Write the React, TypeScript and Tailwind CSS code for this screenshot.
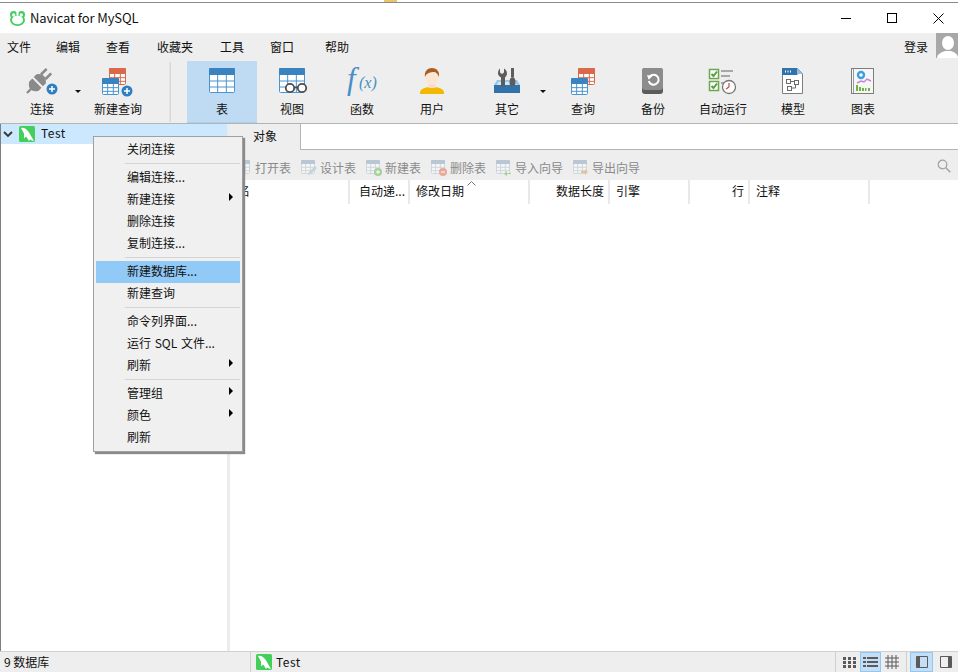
import React from "react";

const FONT = '"Noto Sans CJK SC","Noto Sans",sans-serif';

function TableGrid({ x, y, w, h, head, line, cols = 3, rows = 3, headH = 6 }: { x: number; y: number; w: number; h: number; head: string; line: string; cols?: number; rows?: number; headH?: number }) {
  const lines: React.ReactNode[] = [];
  for (let i = 1; i < cols; i++) {
    const px = x + (w * i) / cols;
    lines.push(<line key={"c" + i} x1={px} x2={px} y1={y + headH} y2={y + h} stroke={line} strokeWidth="1" />);
  }
  for (let i = 1; i < rows; i++) {
    const py = y + headH + ((h - headH) * i) / rows;
    lines.push(<line key={"r" + i} x1={x} x2={x + w} y1={py} y2={py} stroke={line} strokeWidth="1" />);
  }
  return (
    <g>
      <rect x={x + 0.5} y={y + 0.5} width={w - 1} height={h - 1} rx="1" fill="#fff" stroke={line} />
      {lines}
      <path d={`M${x} ${y + 1}a1 1 0 0 1 1-1h${w - 2}a1 1 0 0 1 1 1v${headH - 1}h-${w}z`} fill={head} />
    </g>
  );
}

function Plus({ cx, cy }: { cx: number; cy: number }) {
  return (
    <g>
      <circle cx={cx} cy={cy} r="5.5" fill="#2f7fc1" />
      <path d={`M${cx - 3} ${cy}h6M${cx} ${cy - 3}v6`} stroke="#fff" strokeWidth="1.5" />
    </g>
  );
}

function Svg({ children, w = 32, h = 32 }: { children: React.ReactNode; w?: number; h?: number }) {
  return (
    <svg width={w} height={h} viewBox={`0 0 ${w} ${h}`} className="block">
      {children}
    </svg>
  );
}

const PlugIcon = () => (
  <Svg>
    <g transform="translate(1 27) rotate(-45)" fill="#8a8a8a">
      <rect x="0" y="-1.2" width="6" height="2.4" />
      <path d="M14-6.500V6.500H9.500Q5 3.500 5 0T9.500-6.500Z" />
      <path d="M16-6.500H20Q24-3.500 24 0T20 6.500H16Z" />
      <rect x="23" y="-4.500" width="8" height="2.600" />
      <rect x="23" y="1.900" width="8" height="2.600" />
    </g>
    <Plus cx={26} cy={23} />
  </Svg>
);
const NewQueryIcon = () => (
  <Svg>
    <TableGrid x={7} y={2} w={17} h={17} head="#d9694a" line="#d9694a" />
    <TableGrid x={0} y={12} w={17} h={17} head="#3a83c1" line="#4a94d0" />
    <Plus cx={25} cy={25} />
  </Svg>
);
const TableIcon = () => (
  <Svg>
    <TableGrid x={3} y={2} w={26} h={25} head="#3a83c1" line="#4a94d0" headH={7} />
  </Svg>
);
const ViewIcon = () => (
  <Svg>
    <TableGrid x={3} y={2} w={26} h={25} head="#3a83c1" line="#4a94d0" headH={7} />
    <circle cx={14} cy={22} r="4.200" fill="#fff" stroke="#4d4d4d" strokeWidth="1.800" />
    <circle cx={26} cy={22} r="4.200" fill="#fff" stroke="#4d4d4d" strokeWidth="1.800" />
    <path d="M18 21.500h4" stroke="#4d4d4d" strokeWidth="1.600" />
  </Svg>
);
const FuncIcon = () => (
  <div className="relative h-8 w-8 text-[#4a8fc4]" style={{ fontFamily: '"Liberation Serif",serif' }}>
    <span className="absolute left-[1px] top-[-6px] text-[31px] italic leading-[38px]">f</span>
    <span className="absolute left-[13px] top-[7px] text-[16px] italic leading-[20px]">(x)</span>
  </div>
);
const UserIcon = () => (
  <Svg>
    <path d="M4 27c0-4 4-5 8-6h8c4 1 8 2 8 6v1H4z" fill="#f5b800" />
    <rect x="12.500" y="16" width="7" height="6" fill="#f4dcc8" />
    <ellipse cx="16" cy="11" rx="7" ry="8" fill="#fbe5d5" />
    <path d="M9 11c-1-6 3-9 7-9s8 3 7 9c-1-3-3-5-5-5-3 0-8 1-9 5z" fill="#a95d22" />
  </Svg>
);
const ToolsIcon = () => (
  <Svg w={28} h={32}>
    <path d="M1 19h26v8H1z" fill="#2f73aa" />
    <path d="M4 14h20l3 5H1z" fill="#9cc8e8" />
    <path d="M5.500 16h17l1.500 3H4z" fill="#fff" opacity=".55" />
    <path d="M7 2.500v4l2 1.500 2-1.500v-4c2 1 3 3 3 5 0 2-1.200 3.300-2 4v9H8v-9c-1.500-.8-3-2.200-3-4 0-2 .5-4 2-5z" fill="#5d5d5d" />
    <path d="M18 2h3v9h-3z" fill="#5d5d5d" />
    <path d="M16.500 17c0-4 1-6 3-6s3 2 3 6c0 2-1 3-3 3s-3-1-3-3z" fill="#5d5d5d" />
  </Svg>
);
const QueryIcon = () => (
  <Svg>
    <TableGrid x={11} y={2} w={17} h={17} head="#d9694a" line="#d9694a" />
    <TableGrid x={4} y={12} w={17} h={17} head="#3a83c1" line="#4a94d0" />
  </Svg>
);
const BackupIcon = () => (
  <Svg>
    <rect x="5" y="2" width="21" height="26" rx="3" fill="#5c5c5c" />
    <rect x="5" y="2" width="21" height="22" rx="3" fill="#8c8c8c" />
    <path d="M12.800 10.500a5 5 0 1 1-1 4.500" fill="none" stroke="#fff" strokeWidth="2" />
    <path d="M10 9l5.500 1-3.800 3.800z" fill="#fff" />
  </Svg>
);
const RunIcon = () => (
  <Svg w={30} h={30}>
    <rect x="1.500" y="2.500" width="9" height="9" fill="#fff" stroke="#6aa84f" strokeWidth="1.500" />
    <rect x="1.500" y="14.500" width="9" height="9" fill="#fff" stroke="#6aa84f" strokeWidth="1.500" />
    <path d="M3.500 7l2 2 3.500-4.500M3.500 19l2 2 3.500-4.500" fill="none" stroke="#5a9e3a" strokeWidth="2" />
    <path d="M13 3h12v2H13zM13 8h9v2H13zM13 15h3v2h-3z" fill="#a8a8a8" />
    <circle cx="21" cy="20" r="6.500" fill="#fff" stroke="#777" strokeWidth="1.300" />
    <path d="M21 20v-4M21 20l-3 2" stroke="#c8463c" strokeWidth="1.200" />
  </Svg>
);
const ModelIcon = () => (
  <Svg>
    <path d="M5.500 2.500h15l5 5v20h-20z" fill="#fff" stroke="#7d7d7d" />
    <path d="M5 2h15.500v7H5z" fill="#2f73aa" />
    <path d="M20 2l6 6h-6z" fill="#8fbfe3" />
    <path d="M8 4.500h1v2H8zM10.500 4.500h1v2h-1zM13 4.500h1v2h-1z" fill="#fff" />
    <g fill="none" stroke="#6b6b6b">
      <rect x="9.500" y="13.500" width="4" height="4" />
      <rect x="17.500" y="14.500" width="4" height="4" />
      <rect x="10.500" y="20.500" width="4" height="4" />
      <path d="M13.500 15.500h4M18.500 18.500v3.500h-4" />
    </g>
  </Svg>
);
const ChartIcon = () => (
  <Svg>
    <rect x="4.500" y="2.500" width="22" height="25" fill="#f6f6f6" stroke="#7d7d7d" />
    <path d="M6 3h1v24H6z" fill="#9a9a9a" />
    <circle cx="14" cy="9" r="3" fill="#fff" stroke="#3aa0e0" strokeWidth="2.400" />
    <path d="M10 17l4-2 3 1 3-3 4 2" fill="none" stroke="#c486d0" strokeWidth="1.400" />
    <path d="M9 19h2v6H9zM12 21h2v4h-2zM15 22h2v3h-2zM18 22h1.500v3H18zM21 22h2v3h-2z" fill="#6db33f" />
  </Svg>
);

const Caret = () => <div className="h-0 w-0 border-x-[3px] border-t-[3px] border-x-transparent border-t-[#111]" />;

function Tool({ label, icon, active }: { label: string; icon: React.ReactNode; active?: boolean }) {
  return (
    <div className={"flex h-[62px] w-[70px] flex-col items-center " + (active ? "border-b border-[#a8d0f0] bg-[#bfdbf3]" : "")}>
      <div className="mt-[6px] flex h-[30px] w-8 items-center justify-center">{icon}</div>
      <div className="mt-[3px] text-xs leading-[18px]">{label}</div>
    </div>
  );
}

function MysqlIcon() {
  return (
    <svg width="16" height="16" viewBox="0 0 16 16" className="block">
      <rect width="16" height="16" rx="1.500" fill="#43d05a" />
      <path d="M2 2C4 1.500 6 2 8 4 10 6 11 8 12 10 13 12 14 13 15 15 13 14.500 12 14 11 13.500L10 15C9 13 8 12 7 10.500L5 12.500C5 10.500 5 9 5 7.500 4 5.500 3 4 2 2Z" fill="#fff" />
    </svg>
  );
}

function Logo() {
  return (
    <svg width="17" height="17" viewBox="0 0 17 17" className="block">
      <g fill="#3fcf5e">
        <circle cx="4.500" cy="4.500" r="3.500" />
        <circle cx="12.500" cy="4.500" r="3.500" />
        <ellipse cx="8.500" cy="10" rx="7.500" ry="6" />
      </g>
      <g fill="#fff">
        <ellipse cx="8.500" cy="10" rx="5.600" ry="4.200" />
        <circle cx="4.700" cy="5" r="1.700" />
        <circle cx="12.300" cy="5" r="1.700" />
      </g>
      <path d="M8.500 2.500v3.300" stroke="#fff" strokeWidth="2" />
    </svg>
  );
}

type Row = { t: string; sub?: boolean; hi?: boolean } | "sep";
const MENU: Row[] = [
  { t: "关闭连接" },
  "sep",
  { t: "编辑连接..." },
  { t: "新建连接", sub: true },
  { t: "删除连接" },
  { t: "复制连接..." },
  "sep",
  { t: "新建数据库...", hi: true },
  { t: "新建查询" },
  "sep",
  { t: "命令列界面..." },
  { t: "运行 SQL 文件..." },
  { t: "刷新", sub: true },
  "sep",
  { t: "管理组", sub: true },
  { t: "颜色", sub: true },
  { t: "刷新" },
];

function ContextMenu() {
  return (
    <div className="absolute left-[93px] top-[136px] w-[150px] border border-[#a0a0a0] bg-[#f0f0f0] px-[2px] py-[2px] shadow-[2px_2px_1px_#8a8a8a]">
      {MENU.map((m, i) =>
        m === "sep" ? (
          <div key={i} className="ml-[29px] h-[6px] pt-[2px]">
            <div className="h-px bg-[#d4d4d4]" />
          </div>
        ) : (
          <div key={i} className={"relative h-[22px] pl-[31px] text-xs leading-[20px] [word-spacing:1px] " + (m.hi ? "bg-[#91c9f7]" : "")}>
            {m.t}
            {m.sub && <div className="absolute right-[7px] top-[4px] h-0 w-0 border-y-[4px] border-l-[4px] border-y-transparent border-l-black" />}
          </div>
        )
      )}
    </div>
  );
}

function SmallTable({ badge }: { badge?: React.ReactNode }) {
  return (
    <svg width="18" height="18" viewBox="0 0 18 18" className="block">
      <g opacity=".45">
        <TableGrid x={1} y={1} w={14} h={14} head="#7a9ab5" line="#a9bccb" headH={4} />
      </g>
      {badge}
    </svg>
  );
}

function ActionItem({ label, badge, w }: { label: string; badge?: React.ReactNode; w: string }) {
  return (
    <div className={"flex items-center " + w}>
      <SmallTable badge={badge} />
      <span className="ml-[2px] text-xs text-[#8a8a8a]">{label}</span>
    </div>
  );
}

const Col = ({ w, label, right, pl }: { w: string; label: string; right?: boolean; pl?: string }) => (
  <div className={"h-[24px] shrink-0 border-r-2 border-[#e8e8e8] text-xs leading-[21px] " + w + " " + (right ? "pr-1 text-right " : "") + (pl ?? "")}>{label}</div>
);

const ViewBtn = ({ active, wide, children }: { active?: boolean; wide?: boolean; children: React.ReactNode }) => (
  <div className={"flex h-[20px] items-center justify-center " + (wide ? "w-[23px] " : "w-[21px] ") + (active ? "border border-[#90c8f4] bg-[#c4def5]" : "")}>{children}</div>
);

export default function App() {
  return (
    <div className="relative flex h-[672px] w-[958px] flex-col overflow-hidden bg-white text-[#111]" style={{ fontFamily: FONT }}>
      <div className="h-[3px] shrink-0 border-b border-[#8a8a8a] bg-white pl-[384px]">
        <div className="h-[2px] w-[13px] bg-[#e8c76a]" />
      </div>
      {/* title bar */}
      <div className="flex h-[30px] shrink-0 items-center bg-white pl-[9px]">
        <Logo />
        <span className="ml-1 text-[13px] tracking-[-0.1px]">Navicat for MySQL</span>
        <div className="-mr-[3px] ml-auto flex items-center">
          <div className="flex h-[30px] w-[46px] items-center justify-center">
            <div className="h-px w-[10px] bg-black" />
          </div>
          <div className="flex h-[30px] w-[46px] items-center justify-center">
            <div className="h-[10px] w-[10px] border border-black" />
          </div>
          <div className="flex h-[30px] w-[46px] items-center justify-center">
            <svg width="11" height="11" viewBox="0 0 11 11"><path d="M.5.500l10 10M10.500.500l-10 10" stroke="#000" /></svg>
          </div>
        </div>
      </div>
      {/* menu */}
      <div className="relative h-[28px] shrink-0 bg-[#eeeeee] text-xs">
        <div className="flex h-[28px] items-center pl-[7px] leading-none">
          <span className="w-[49px]">文件</span>
          <span className="w-[50px]">编辑</span>
          <span className="w-[51px]">查看</span>
          <span className="w-[63px]">收藏夹</span>
          <span className="w-[50px]">工具</span>
          <span className="w-[55px]">窗口</span>
          <span>帮助</span>
          <span className="ml-auto mr-[30px]">登录</span>
        </div>
        <div className="absolute right-0 top-0 h-[25px] w-[22px] overflow-hidden bg-[#a8a8a8]">
          <svg width="22" height="25" viewBox="0 0 22 25">
            <ellipse cx="12" cy="10" rx="6" ry="7" fill="#fff" />
            <path d="M1 25c0-4 5-6 8-7h6c3 1 7 3 7 7z" fill="#fff" />
          </svg>
        </div>
      </div>
      {/* toolbar */}
      <div className="flex h-[63px] shrink-0 border-b border-[#b4b4b4] bg-[#eeeeee] pl-[7px]">
        <Tool label="连接" icon={<PlugIcon />} />
        <div className="flex w-[6px] items-start pt-[29px]"><div className="-ml-[2px]"><Caret /></div></div>
        <Tool label="新建查询" icon={<NewQueryIcon />} />
        <div className="ml-[16px] mr-[16px] mt-[1px] h-[60px] w-[2px] border-r border-[#d8d8d8] bg-[#e4e4e4]" />
        <Tool label="表" icon={<TableIcon />} active />
        <Tool label="视图" icon={<ViewIcon />} />
        <Tool label="函数" icon={<FuncIcon />} />
        <Tool label="用户" icon={<UserIcon />} />
        <div className="ml-[5px]"><Tool label="其它" icon={<ToolsIcon />} /></div>
        <div className="flex w-[6px] items-start pt-[29px]"><div className="-ml-[2px]"><Caret /></div></div>
        <Tool label="查询" icon={<QueryIcon />} />
        <Tool label="备份" icon={<BackupIcon />} />
        <Tool label="自动运行" icon={<RunIcon />} />
        <Tool label="模型" icon={<ModelIcon />} />
        <Tool label="图表" icon={<ChartIcon />} />
      </div>
      {/* body */}
      <div className="flex min-h-0 flex-1">
        <div className="w-[227px] shrink-0 border-l border-[#808080] bg-white">
          <div className="flex h-[20px] w-[226px] items-center bg-[#cce8ff]">
            <svg width="10" height="7" viewBox="0 0 10 7" className="ml-[2px]"><path d="M1 1l4 4 4-4" fill="none" stroke="#333" strokeWidth="1.800" /></svg>
            <div className="ml-[6px]"><MysqlIcon /></div>
            <span className="ml-[6px] pb-[2px] text-xs tracking-[0.5px]">Test</span>
          </div>
        </div>
        <div className="w-[3px] shrink-0 bg-[#ececec]" />
        <div className="flex min-w-0 flex-1 flex-col">
          <div className="flex h-[26px] shrink-0">
            <div className="flex w-[71px] items-center justify-center border-r border-[#b4b4b4] bg-[#eeeeee] pb-[2px] text-xs">对象</div>
            <div className="flex-1 border-b border-[#b4b4b4] bg-white" />
          </div>
          <div className="flex h-[30px] shrink-0 items-center bg-[#eeeeee] pl-[5px] pt-[6px]">
            <ActionItem w="w-[65px]" label="打开表" />
            <ActionItem
              w="w-[65px]"
              label="设计表"
              badge={<path d="M8 16l1-3 6-6 2 2-6 6z" fill="#c8d2da" />}
            />
            <ActionItem
              w="w-[65px]"
              label="新建表"
              badge={<g><circle cx="13" cy="13" r="4" fill="#a9cf9a" /><path d="M11 13h4M13 11v4" stroke="#fff" /></g>}
            />
            <ActionItem
              w="w-[65px]"
              label="删除表"
              badge={<g><circle cx="13" cy="13" r="4" fill="#e9a79d" /><path d="M11 13h4" stroke="#fff" /></g>}
            />
            <ActionItem
              w="w-[77px]"
              label="导入向导"
              badge={<path d="M16 14h-4v-2l-3 3 3 2v-2h4z" fill="#a9cf9a" />}
            />
            <ActionItem
              w="w-[80px]"
              label="导出向导"
              badge={<path d="M9 12h4v-2l3 3-3 3v-2H9z" fill="#e6c48f" />}
            />
            <svg width="14" height="14" viewBox="0 0 14 14" className="relative -top-[2px] ml-auto mr-[7px]">
              <circle cx="5.500" cy="5.500" r="4.300" fill="none" stroke="#a0a0a0" strokeWidth="1.200" />
              <path d="M8.800 8.800l4.500 4.500" stroke="#a0a0a0" strokeWidth="1.400" />
            </svg>
          </div>
          <div className="relative flex h-[24px] shrink-0 bg-white">
            <Col w="w-[120px]" label="名" pl="pl-[8px]" />
            <Col w="w-[60px]" label="自动递..." pl="pl-[9px]" />
            <Col w="w-[120px]" label="修改日期" pl="pl-[6px]" />
            <Col w="w-[80px]" label="数据长度" right />
            <Col w="w-[80px]" label="引擎" pl="pl-[6px]" />
            <Col w="w-[60px]" label="行" right />
            <Col w="w-[120px]" label="注释" pl="pl-[6px]" />
            <svg width="9" height="5" viewBox="0 0 9 5" className="absolute left-[237px] top-[1px]"><path d="M.5 4.500l4-4 4 4" fill="none" stroke="#777" /></svg>
          </div>
          <div className="flex-1 bg-white" />
        </div>
      </div>
      {/* status */}
      <div className="flex h-[21px] shrink-0 items-center border-t border-[#d0d0d0] bg-[#eeeeee] text-xs">
        <div className="h-full w-[251px] border-r border-[#d0d0d0] pl-[4px] leading-[20px]">9 数据库</div>
        <div className="ml-[5px]"><MysqlIcon /></div>
        <span className="ml-[4px] tracking-[0.5px]">Test</span>
        <div className="ml-auto flex h-full items-center">
          <div className="mr-[3px] h-full w-px bg-[#d0d0d0]" />
          <ViewBtn>
            <svg width="14" height="11" viewBox="0 0 14 11"><path d="M0 0h3v3H0zM5 0h3v3H5zM10 0h3v3h-3zM0 4h3v3H0zM5 4h3v3H5zM10 4h3v3h-3zM0 8h3v3H0zM5 8h3v3H5zM10 8h3v3h-3z" fill="#5a5a5a" /></svg>
          </ViewBtn>
          <ViewBtn active>
            <svg width="15" height="11" viewBox="0 0 15 11"><path d="M0 0h3v2H0zM4 0h11v2H4zM0 4h3v2H0zM4 4h11v2H4zM0 8h3v2H0zM4 8h11v2H4z" fill="#5a5a5a" /></svg>
          </ViewBtn>
          <ViewBtn>
            <svg width="14" height="14" viewBox="0 0 14 14"><path d="M0 3h14M0 7h14M0 11h14M3 0v14M7 0v14M11 0v14" stroke="#5a5a5a" /></svg>
          </ViewBtn>
          <div className="ml-[4px] mr-[3px] h-full w-px bg-[#d0d0d0]" />
          <ViewBtn active wide>
            <svg width="12" height="12" viewBox="0 0 12 12"><path d="M.5.500h11v11H.5z" fill="none" stroke="#5a5a5a" /><path d="M1 1h3v10H1z" fill="#5a5a5a" /></svg>
          </ViewBtn>
          <div className="w-[2px]" />
          <ViewBtn>
            <svg width="12" height="12" viewBox="0 0 12 12"><path d="M.5.500h11v11H.5z" fill="none" stroke="#5a5a5a" /><path d="M8 1h3v10H8z" fill="#5a5a5a" /></svg>
          </ViewBtn>
          <div className="w-[2px]" />
        </div>
      </div>
      <ContextMenu />
    </div>
  );
}
